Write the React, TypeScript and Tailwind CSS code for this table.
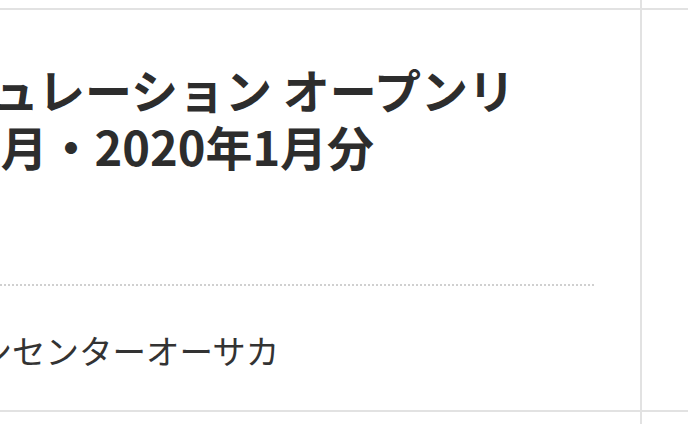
import React from "react";

export default function App() {
  const font = { fontFamily: '"Noto Sans CJK JP", "Noto Sans", sans-serif' };
  return (
    <div className="w-[688px] h-[424px] overflow-hidden bg-white flex flex-col" style={font}>
      {/* row above */}
      <div className="flex h-[8px] shrink-0">
        <div className="w-[642px] shrink-0 border-r-2 border-[#e2e2e2]" />
        <div className="flex-1" />
      </div>
      {/* card row */}
      <div className="flex h-[404px] shrink-0 border-y-2 border-[#e2e2e2]">
        <div className="w-[642px] shrink-0 border-r-2 border-[#e2e2e2] overflow-hidden pr-[46px] flex flex-col">
          <h2 className="mt-[50px] -ml-[55px] whitespace-nowrap text-[47px] leading-[57px] font-bold text-[#2d2d2d]">
            ミュレーション オープンリ
            <br />
            12月・2020年1月分
          </h2>
          <div className="mt-[110px] border-t-2 border-dotted border-[#d0d0d0]" />
          <p className="mt-[40px] -ml-[55px] whitespace-nowrap text-[33.5px] leading-[48px] text-[#333]">
            ョンセンターオーサカ
          </p>
        </div>
        <div className="flex-1" />
      </div>
      {/* row below */}
      <div className="flex flex-1">
        <div className="w-[642px] shrink-0 border-r-2 border-[#e2e2e2]" />
        <div className="flex-1" />
      </div>
    </div>
  );
}
